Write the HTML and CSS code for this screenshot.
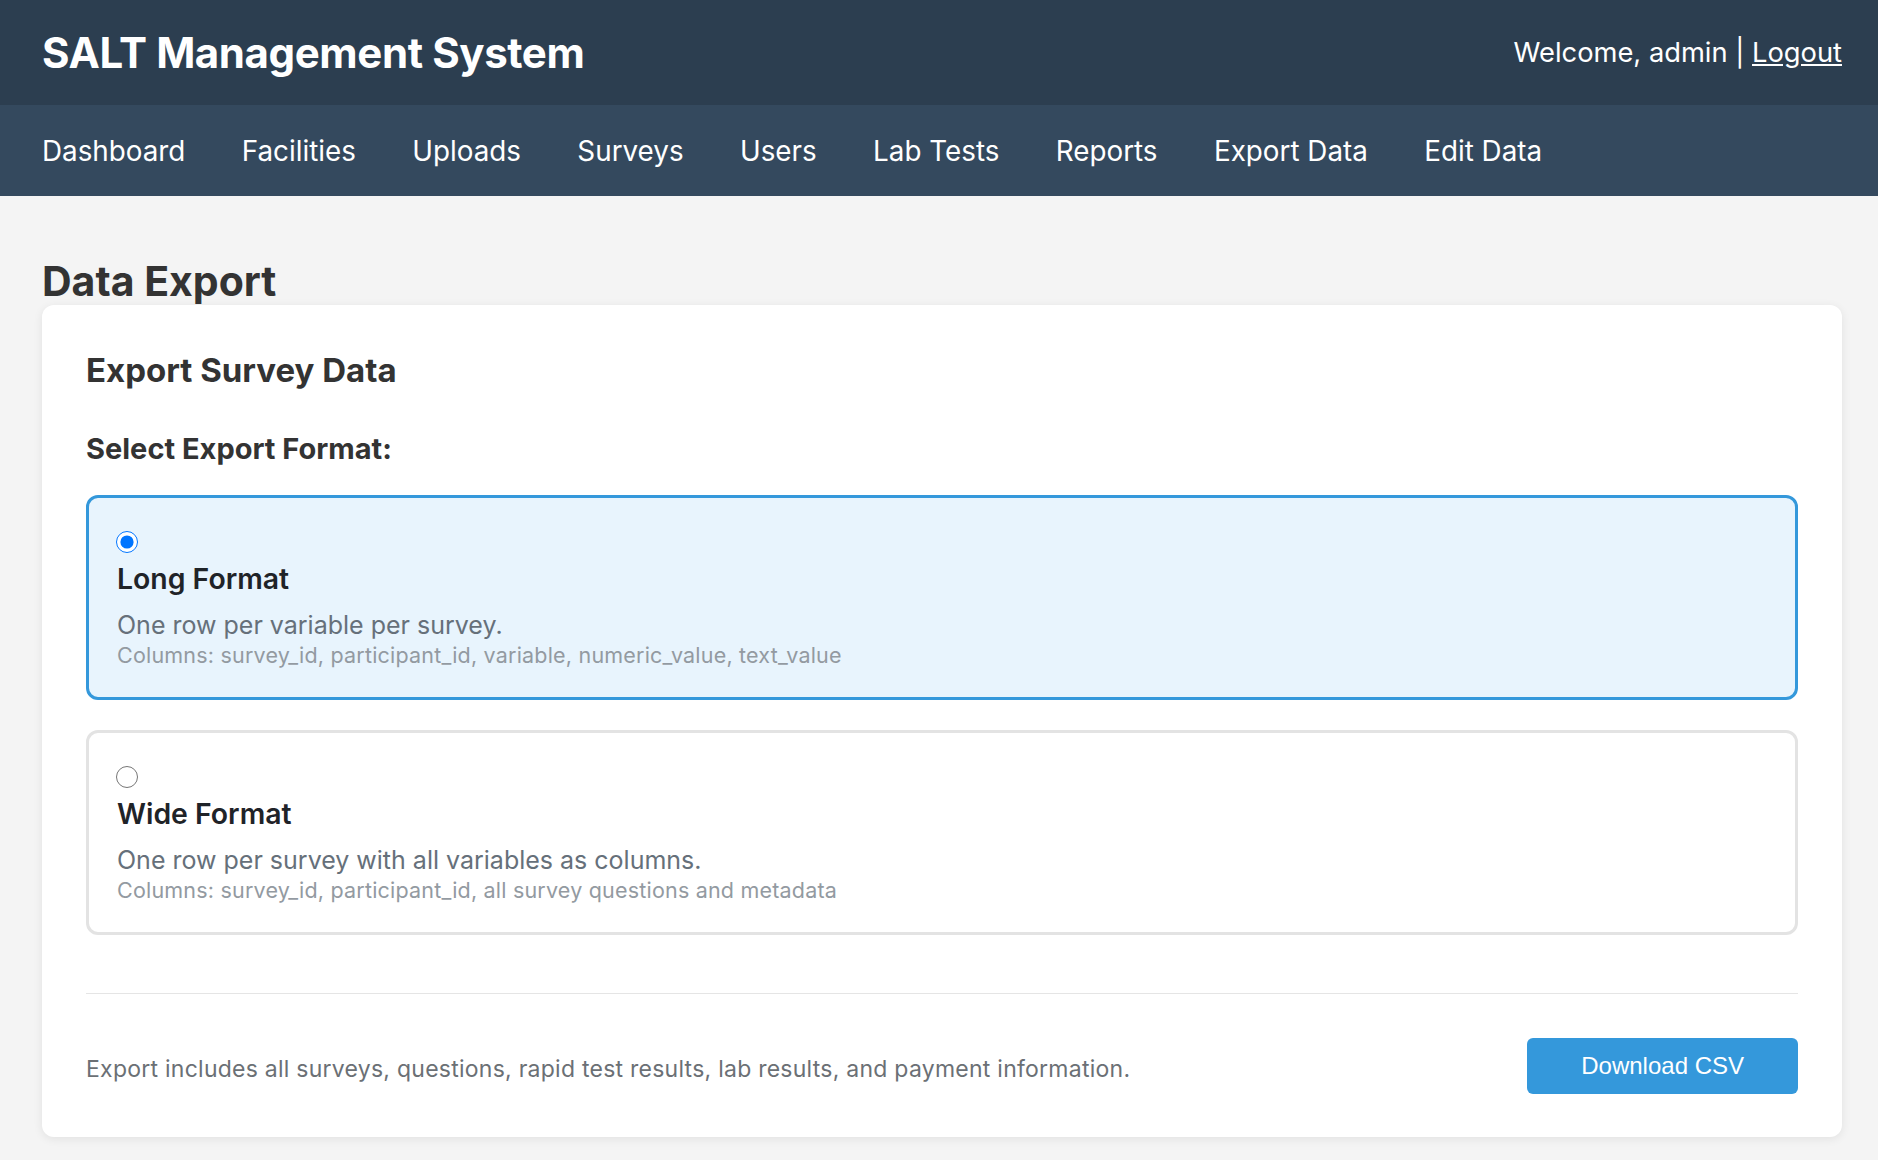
FILE: index.html
```html
<!DOCTYPE html>
<html lang="en">
<head>
    <meta charset="UTF-8">
    <meta name="viewport" content="width=device-width, initial-scale=1.0">
    <title>Data Export - SALT Management System</title>
    <link rel="stylesheet" href="styles.css">
</head>
<body>
    <header class="topbar">
        <h1 class="brand">SALT Management System</h1>
        <div class="user-info">Welcome, admin | <a href="#">Logout</a></div>
    </header>
    <nav class="main-nav">
        <a href="#">Dashboard</a>
        <a href="#">Facilities</a>
        <a href="#">Uploads</a>
        <a href="#">Surveys</a>
        <a href="#">Users</a>
        <a href="#">Lab Tests</a>
        <a href="#">Reports</a>
        <a href="#">Export Data</a>
        <a href="#">Edit Data</a>
    </nav>

    <main class="page">
        <h1 class="page-title">Data Export</h1>
        <section class="card">
            <h2>Export Survey Data</h2>
            <h3>Select Export Format:</h3>

            <label class="format-option selected">
                <input type="radio" name="format" value="long" checked>
                <span class="format-name">Long Format</span>
                <span class="format-desc">One row per variable per survey.</span>
                <span class="format-cols">Columns: survey_id, participant_id, variable, numeric_value, text_value</span>
            </label>

            <label class="format-option">
                <input type="radio" name="format" value="wide">
                <span class="format-name">Wide Format</span>
                <span class="format-desc">One row per survey with all variables as columns.</span>
                <span class="format-cols">Columns: survey_id, participant_id, all survey questions and metadata</span>
            </label>

            <div class="export-footer">
                <p>Export includes all surveys, questions, rapid test results, lab results, and payment information.</p>
                <button type="button" class="btn-download">Download CSV</button>
            </div>
        </section>
    </main>
</body>
</html>
```
FILE: styles.css
```css
body {
    margin: 0;
    background-color: #f4f4f4;
    font-family: Inter, "Noto Sans", sans-serif;
    color: #333;
}

.topbar {
    display: flex;
    align-items: center;
    justify-content: space-between;
    height: 105px;
    padding: 0 36px 0 42px;
    background-color: #2c3e50;
    color: #fff;
}

.brand {
    margin: 0;
    font-size: 42px;
    font-weight: 700;
    letter-spacing: -0.4px;
}

.user-info {
    font-size: 27.3px;
}

.user-info a {
    color: #fff;
    text-decoration: underline;
}

.main-nav {
    display: flex;
    align-items: center;
    gap: 56.4px;
    height: 91px;
    padding: 0 42px;
    background-color: #34495e;
}

.main-nav a {
    color: #fff;
    text-decoration: none;
    font-size: 27.8px;
}

.page {
    padding: 61px 36px 40px 42px;
}

.page-title {
    margin: 0;
    font-size: 41px;
    line-height: 48px;
    font-weight: 700;
    color: #333;
}

.card {
    padding: 45px 44px 43px;
    background-color: #fff;
    border-radius: 12px;
    box-shadow: 0 2px 10px rgba(0, 0, 0, 0.08);
}

.card h2 {
    margin: 0;
    font-size: 33px;
    line-height: 40px;
    font-weight: 700;
    color: #333;
}

.card h3 {
    margin: 42px 0 29px;
    font-size: 29px;
    line-height: 34px;
    font-weight: 700;
    color: #333;
}

.format-option {
    display: block;
    padding: 33px 28px 29px;
    border: 3px solid #e3e3e3;
    border-radius: 12px;
    background-color: #fff;
    cursor: pointer;
}

.format-option + .format-option {
    margin-top: 30px;
}

.format-option.selected {
    border-color: #3498db;
    background-color: #e8f4fd;
}

.format-option input {
    display: block;
    width: 22px;
    height: 22px;
    margin: 0 0 9px -1px;
}

.format-name {
    display: block;
    font-size: 28.4px;
    line-height: 34px;
    font-weight: 600;
    color: #1f2328;
}

.format-desc {
    display: block;
    margin-top: 14px;
    font-size: 25px;
    line-height: 30px;
    color: #66707a;
}

.format-cols {
    display: block;
    margin-top: 3px;
    font-size: 21.5px;
    line-height: 25px;
    letter-spacing: 0.2px;
    color: #939aa1;
}

.export-footer {
    display: flex;
    align-items: center;
    justify-content: space-between;
    margin-top: 58px;
    padding-top: 44px;
    border-top: 1px solid #e5e5e5;
}

.export-footer p {
    margin: 6px 0 0;
    font-size: 23px;
    letter-spacing: 0.25px;
    color: #6b7075;
}

.btn-download {
    height: 56px;
    padding: 0 54px;
    border: none;
    border-radius: 6px;
    background-color: #3498db;
    color: #fff;
    font-family: "Liberation Sans", Arial, sans-serif;
    font-size: 24px;
    cursor: pointer;
}
```
